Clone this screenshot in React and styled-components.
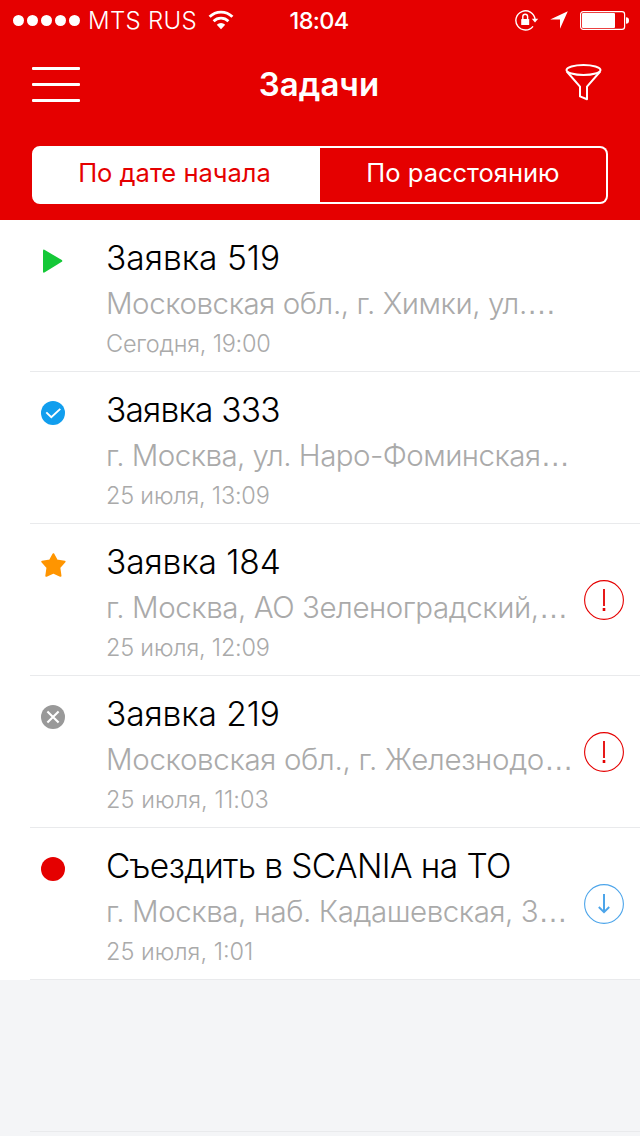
import React from "react";
import styled, { createGlobalStyle } from "styled-components";

const GlobalStyle = createGlobalStyle`
  * {
    box-sizing: border-box;
  }

  body {
    margin: 0;
    background-color: #f4f5f7;
    font-family: Inter, "Liberation Sans", sans-serif;
  }
`;

const Screen = styled.div`
  display: flex;
  flex-direction: column;
  width: 640px;
  height: 1136px;
  overflow: hidden;
  background-color: #f4f5f7;
`;

const Header = styled.header`
  height: 220px;
  color: #fff;
  background-color: #e50000;
`;

const StatusBar = styled.div`
  display: grid;
  grid-template-columns: 1fr auto 1fr;
  align-items: center;
  height: 40px;
  padding: 0 11px 0 13px;
`;

const StatusGroup = styled.div`
  display: flex;
  align-items: center;
  justify-content: ${(props) => (props.$end ? "flex-end" : "flex-start")};
  gap: ${(props) => (props.$end ? 11 : 0)}px;
`;

const SignalDots = styled.div`
  display: flex;
  gap: 3px;
  margin-right: 8px;
`;

const Dot = styled.span`
  width: 11px;
  height: 11px;
  border-radius: 50%;
  background-color: #fff;
`;

const Carrier = styled.span`
  margin-right: 11px;
  padding-top: 2px;
  font-size: 24px;
  font-weight: 300;
  line-height: 38px;
  letter-spacing: 0.3px;
`;

const Clock = styled.span`
  padding: 2px 4px 0 0;
  font-size: 23.5px;
  font-weight: 500;
  line-height: 38px;
  letter-spacing: -0.7px;
`;

const NavBar = styled.div`
  display: grid;
  grid-template-columns: 70px 1fr 70px;
  align-items: center;
  height: 88px;
  padding: 0 32px;
`;

const MenuButton = styled.button`
  display: flex;
  flex-direction: column;
  gap: 13px;
  width: 48px;
  padding: 0;
  border: 0;
  background: none;
`;

const MenuLine = styled.span`
  height: 3px;
  border-radius: 1px;
  background-color: #fff;
`;

const PageTitle = styled.h1`
  margin: 0;
  padding-right: 2px;
  font-size: 33px;
  font-weight: 600;
  line-height: 40px;
  text-align: center;
`;

const FilterButton = styled.button`
  display: flex;
  justify-self: end;
  margin: 0 6px 4px 0;
  padding: 0;
  border: 0;
  color: #fff;
  background: none;
`;

const Segments = styled.div`
  display: flex;
  height: 58px;
  margin: 18px 32px 0;
`;

const Segment = styled.button`
  width: 50%;
  padding: 0 0 3px;
  border: 2px solid #fff;
  border-radius: ${(props) => (props.$active ? "8px 0 0 8px" : "0 8px 8px 0")};
  border-left-width: ${(props) => (props.$active ? 2 : 0)}px;
  font-family: inherit;
  font-size: 25.5px;
  font-weight: 400;
  line-height: 30px;
  color: ${(props) => (props.$active ? "#e50000" : "#fff")};
  background-color: ${(props) => (props.$active ? "#fff" : "transparent")};
`;

const SegmentLabel = styled.span`
  display: block;
  padding: 0 ${(props) => (props.$active ? 3 : 0)}px 2px 0;
`;

const TaskList = styled.ul`
  margin: 0;
  padding: 0;
  list-style: none;
  background-color: #fff;
`;

const TaskRow = styled.li`
  display: flex;
  height: 152px;
  padding-left: 30px;
`;

const TaskBody = styled.div`
  display: flex;
  flex: 1;
  border-bottom: 1px solid #e9eaec;
`;

const StatusIcon = styled.div`
  width: 76px;
  padding: 27px 0 0 9px;
`;

const TaskText = styled.div`
  flex: 1;
  min-width: 0;
  padding-top: 18px;
  font-weight: 300;
  white-space: nowrap;
`;

const TaskTitle = styled.div`
  font-size: 33.5px;
  line-height: 40px;
  letter-spacing: ${(props) => props.$tracking}px;
  color: #000;
`;

const TaskAddress = styled.div`
  margin-top: 7px;
  font-size: 29.5px;
  line-height: 36px;
  letter-spacing: ${(props) => props.$tracking}px;
  color: #aaa;
`;

const Ellipsis = styled.span`
  font-family: "Liberation Sans", sans-serif;
  letter-spacing: 0;
`;

const TaskDate = styled.div`
  margin-top: 8px;
  font-size: 23.5px;
  line-height: 28px;
  letter-spacing: ${(props) => props.$tracking}px;
  color: #aaa;
`;

const TaskBadge = styled.div`
  display: flex;
  align-items: center;
  width: 56px;
`;

const Footer = styled.div`
  flex: 1;
  margin-left: 30px;
  padding-top: 151px;
`;

const FooterLine = styled.div`
  height: 1px;
  background-color: #e9eaec;
`;

const WifiIcon = () => (
  <svg width="26" height="20" viewBox="0 0 26 20" fill="none" stroke="#fff">
    <path d="M1.6 6.8a16.2 16.2 0 0 1 22.8 0" strokeWidth="2.9" />
    <path d="M5.6 11.2a10.6 10.6 0 0 1 14.8 0" strokeWidth="2.7" />
    <path d="M13 19.2l-4.2-4.4a6 6 0 0 1 8.4 0z" fill="#fff" stroke="none" />
  </svg>
);

const LockIcon = () => (
  <svg width="24" height="22" viewBox="0 0 24 22" fill="none" stroke="#fff">
    <path d="M18 17.4A9.6 9.6 0 1 1 20 10.2" strokeWidth="1.4" />
    <path d="M16.8 9.8h6.4L20 13.6z" fill="#fff" stroke="none" />
    <rect x="6.2" y="10" width="8" height="6" rx="0.6" fill="#fff" stroke="none" />
    <path d="M7.8 10V7.6a2.4 2.4 0 0 1 4.8 0V10" strokeWidth="1.4" />
  </svg>
);

const LocationIcon = () => (
  <svg width="19" height="18" viewBox="0 0 19 18" fill="#fff">
    <path d="M17.8 0.2L10 17.8V8.6H0.2z" />
  </svg>
);

const BatteryIcon = () => (
  <svg width="49" height="20" viewBox="0 0 49 20" fill="none">
    <rect x="0.6" y="1.6" width="44" height="17.8" rx="2.6" stroke="#fff" strokeWidth="1.2" />
    <rect x="2" y="3" width="33" height="15" rx="1" fill="#fff" />
    <path d="M46 7.2c2 0 3 1 3 3.3s-1 3.3-3 3.3z" fill="#fff" />
  </svg>
);

const FunnelIcon = () => (
  <svg width="38" height="38" viewBox="0 0 38 38" fill="none" stroke="currentColor" strokeWidth="2">
    <ellipse cx="19.5" cy="7" rx="17" ry="5" />
    <path d="M2.8 8.5L16 23.6v9.8l7 2.8V23.6L36.2 8.5" strokeLinejoin="round" />
  </svg>
);

const statusIcons = {
  play: <path d="M5.4 2.7L22.8 13.1a1 1 0 0 1 0 1.6L5.4 25.5a1 1 0 0 1-1.4-.8V3.5a1 1 0 0 1 1.4-.8z" fill="#14c837" />,
  done: (
    <>
      <circle cx="14" cy="14" r="12" fill="#119eee" />
      <path d="M7.3 13.4l5 4.9 9-8.4" stroke="#fff" strokeWidth="1.9" />
    </>
  ),
  star: (
    <path
      d="M14.4 3.2l3.4 6.2 7.8 1.3-5.3 5.8 1.2 8.3-7.1-3.3-7.1 3.3 1.2-8.3-5.3-5.8L11 9.4z"
      fill="#ff9500"
      stroke="#ff9500"
      strokeWidth="2"
      strokeLinejoin="round"
    />
  ),
  cancelled: (
    <>
      <circle cx="14" cy="14" r="12" fill="#999" />
      <path d="M8.4 8.4l11.2 11.2M19.6 8.4L8.4 19.6" stroke="#fff" strokeWidth="2.1" />
    </>
  ),
  overdue: <circle cx="14" cy="14" r="12" fill="#e50000" />,
};

const badgeIcons = {
  alert: (
    <g stroke="#e50000">
      <circle cx="20" cy="20" r="19.4" strokeWidth="1.1" />
      <path d="M20 9v17" strokeWidth="1.8" />
      <path d="M20 28v3" strokeWidth="2.6" />
    </g>
  ),
  download: (
    <g stroke="#4da5ea">
      <circle cx="20" cy="20" r="19.4" strokeWidth="1.1" />
      <path d="M20 10v18" strokeWidth="2" />
      <path d="M14.8 23l5.2 5.2 5.2-5.2" strokeWidth="1.9" />
    </g>
  ),
};

// tracking: letter spacing of the title, the address and the date
const tasks = [
  {
    status: "play",
    title: "Заявка 519",
    address: "Московская обл., г. Химки, ул.",
    date: "Сегодня, 19:00",
    tracking: [0, -0.44, -0.2],
  },
  {
    status: "done",
    title: "Заявка 333",
    address: "г. Москва, ул. Наро-Фоминская",
    date: "25 июля, 13:09",
    tracking: [-0.8, -0.55, -0.2],
  },
  {
    status: "star",
    title: "Заявка 184",
    address: "г. Москва, АО Зеленоградский,",
    date: "25 июля, 12:09",
    badge: "alert",
    tracking: [-0.1, -0.45, -0.2],
  },
  {
    status: "cancelled",
    title: "Заявка 219",
    address: "Московская обл., г. Железнодо",
    date: "25 июля, 11:03",
    badge: "alert",
    tracking: [-0.1, -0.33, 0.1],
  },
  {
    status: "overdue",
    title: "Съездить в SCANIA на ТО",
    address: "г. Москва, наб. Кадашевская, 3",
    date: "25 июля, 1:01",
    badge: "download",
    tracking: [-0.6, -0.45, 0],
  },
];

const Task = ({ task }) => (
  <TaskRow>
    <TaskBody>
      <StatusIcon>
        <svg width="28" height="28" viewBox="0 0 28 28" fill="none">
          {statusIcons[task.status]}
        </svg>
      </StatusIcon>
      <TaskText>
        <TaskTitle $tracking={task.tracking[0]}>{task.title}</TaskTitle>
        <TaskAddress $tracking={task.tracking[1]}>
          {task.address}
          <Ellipsis>…</Ellipsis>
        </TaskAddress>
        <TaskDate $tracking={task.tracking[2]}>{task.date}</TaskDate>
      </TaskText>
      <TaskBadge>
        {task.badge && (
          <svg width="40" height="40" viewBox="0 0 40 40" fill="none">
            {badgeIcons[task.badge]}
          </svg>
        )}
      </TaskBadge>
    </TaskBody>
  </TaskRow>
);

const App = () => {
  return (
    <Screen>
      <GlobalStyle />
      <Header>
        <StatusBar>
          <StatusGroup>
            <SignalDots>
              <Dot />
              <Dot />
              <Dot />
              <Dot />
              <Dot />
            </SignalDots>
            <Carrier>MTS RUS</Carrier>
            <WifiIcon />
          </StatusGroup>
          <Clock>18:04</Clock>
          <StatusGroup $end>
            <LockIcon />
            <LocationIcon />
            <BatteryIcon />
          </StatusGroup>
        </StatusBar>
        <NavBar>
          <MenuButton>
            <MenuLine />
            <MenuLine />
            <MenuLine />
          </MenuButton>
          <PageTitle>Задачи</PageTitle>
          <FilterButton>
            <FunnelIcon />
          </FilterButton>
        </NavBar>
        <Segments>
          <Segment $active>
            <SegmentLabel $active>По дате начала</SegmentLabel>
          </Segment>
          <Segment>
            <SegmentLabel>По расстоянию</SegmentLabel>
          </Segment>
        </Segments>
      </Header>
      <TaskList>
        {tasks.map((task) => (
          <Task key={task.title} task={task} />
        ))}
      </TaskList>
      <Footer>
        <FooterLine />
      </Footer>
    </Screen>
  );
};

export default App;
